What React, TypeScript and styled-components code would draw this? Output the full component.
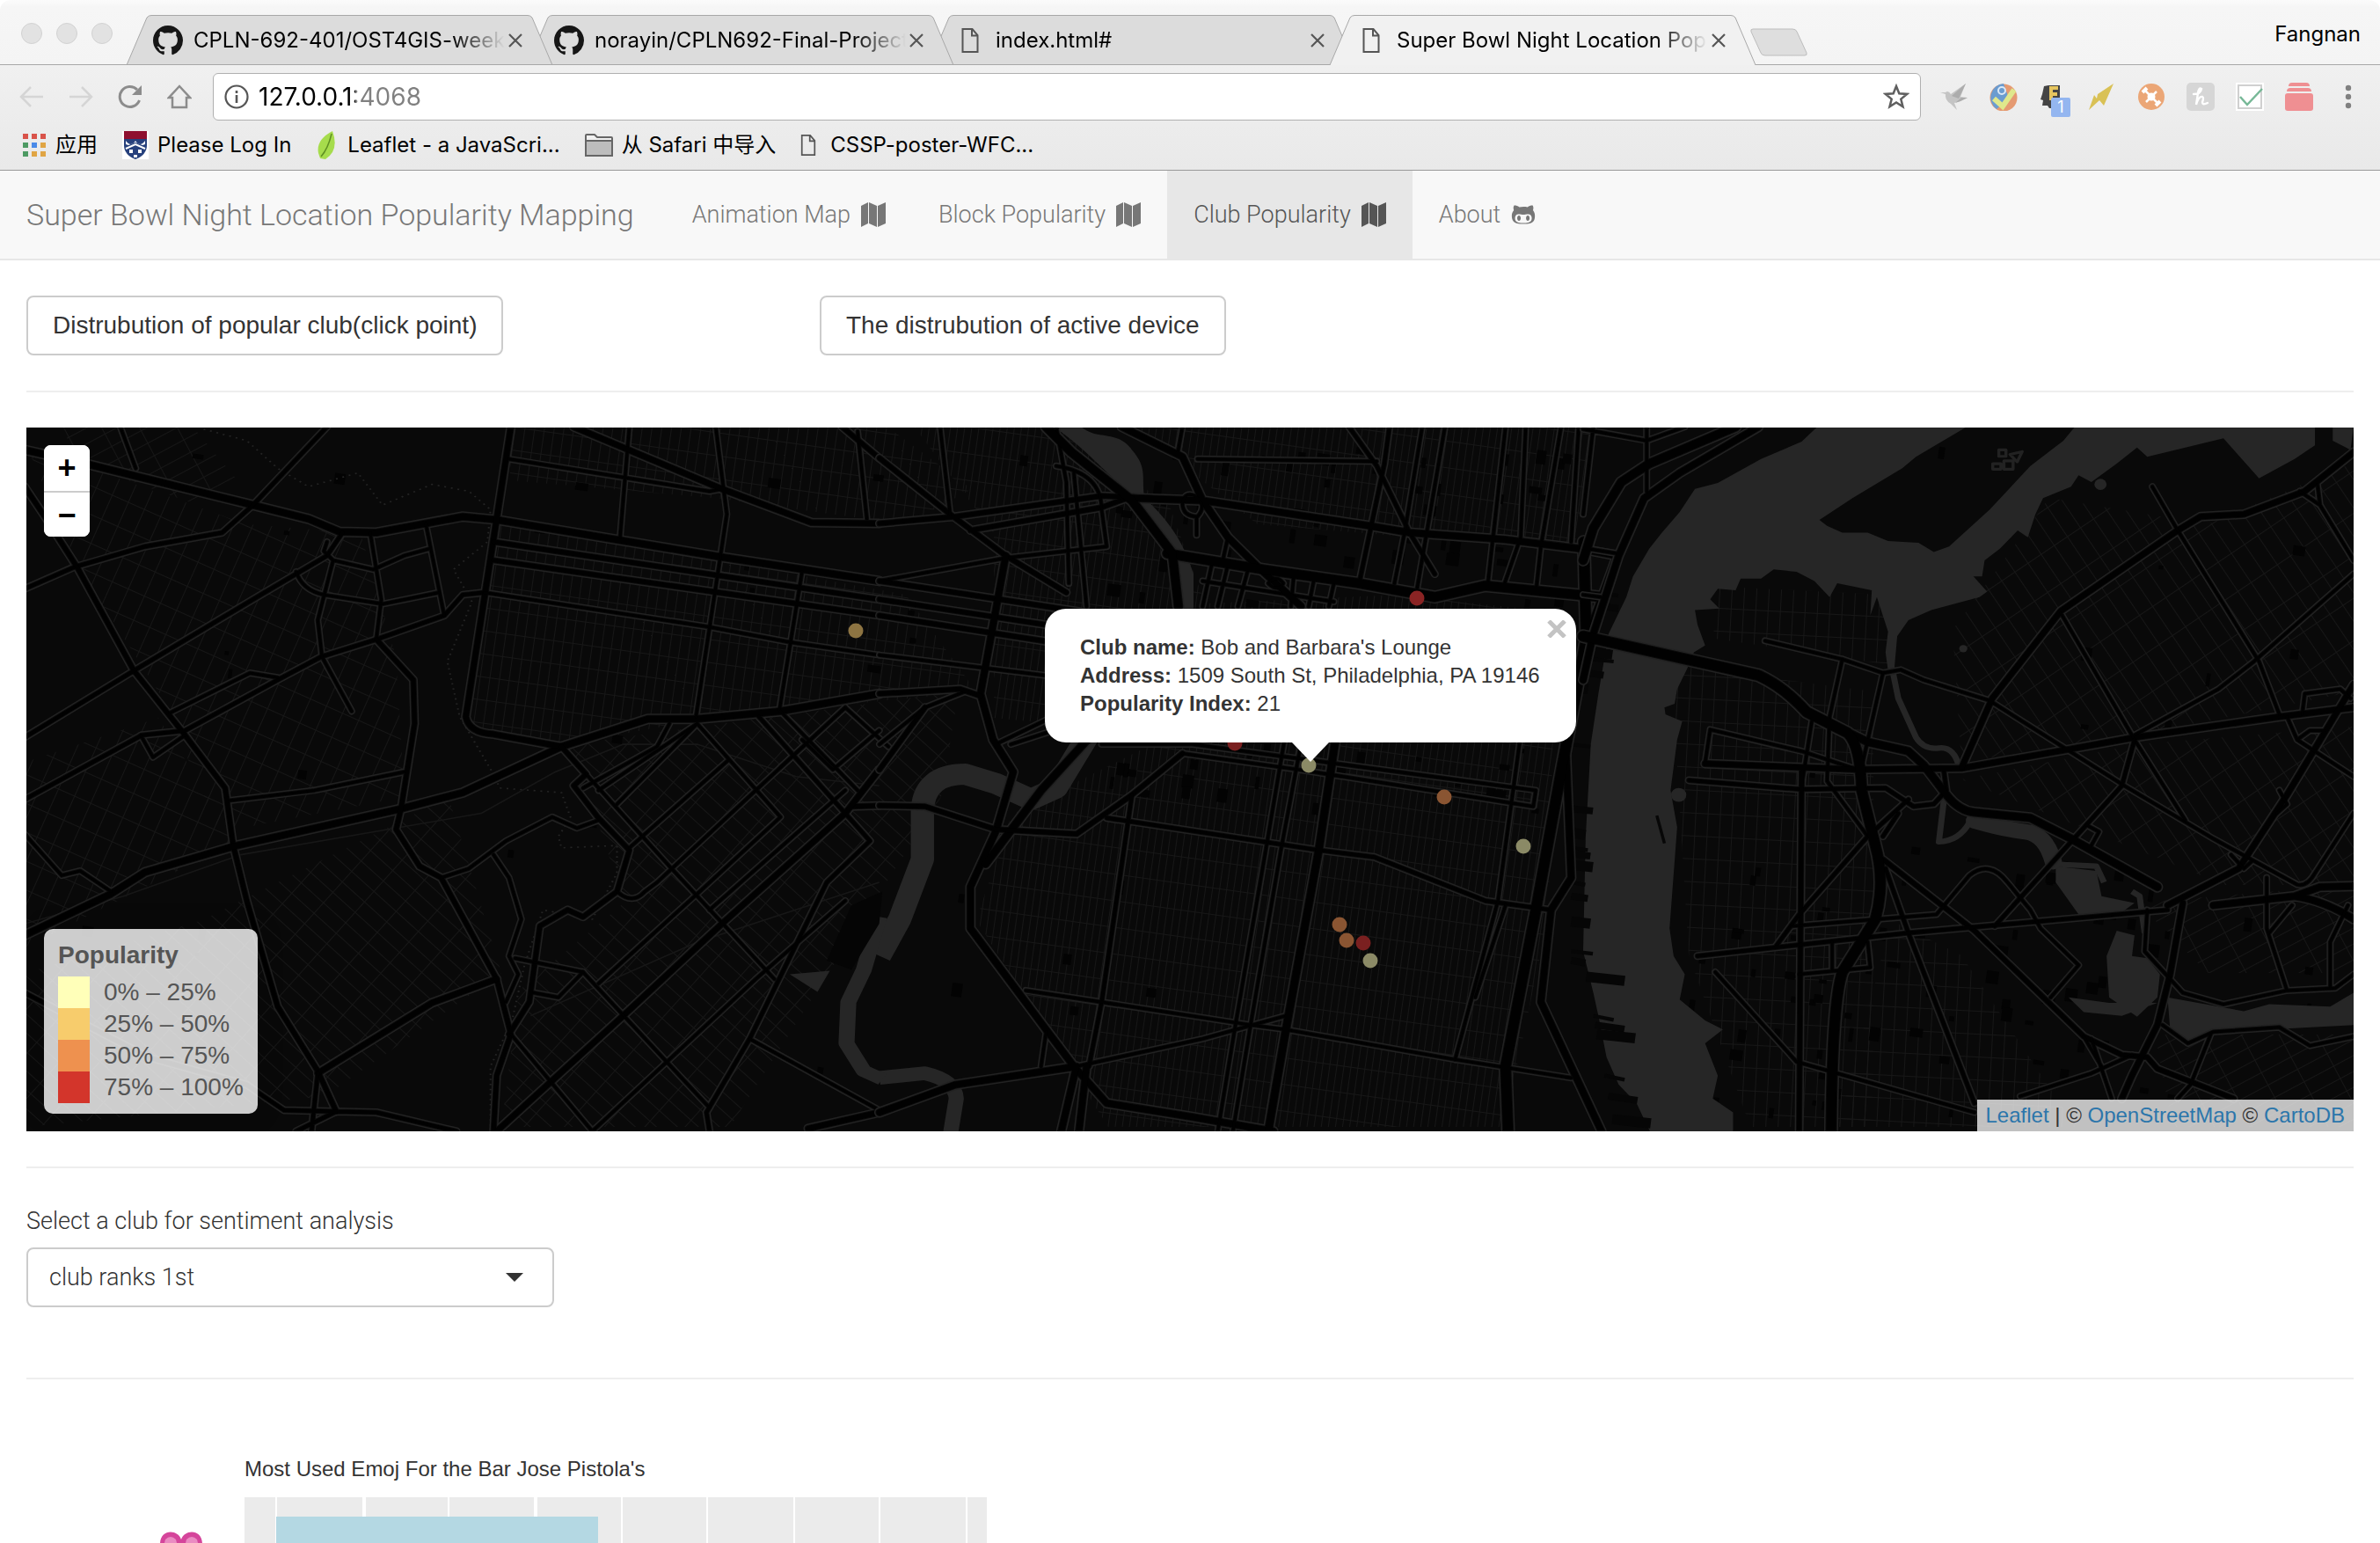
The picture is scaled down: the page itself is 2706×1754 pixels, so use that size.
import React from "react";
import styled, { createGlobalStyle } from "styled-components";
import { FaGithubAlt } from "react-icons/fa";

const sans = `"Liberation Sans", Arial, Helvetica, "Noto Sans CJK SC", sans-serif`;
const system = `Inter, "Noto Sans CJK SC", sans-serif`;
const light = `Roboto, "Liberation Sans", sans-serif`;

const GlobalStyle = createGlobalStyle`
  *, *::before, *::after { box-sizing: border-box; }
  body { margin: 0; background: #fff; color: #333; font-family: ${sans}; }
  button, input, select { font: inherit; color: inherit; margin: 0; }
  ul { list-style: none; margin: 0; padding: 0; }
  a { text-decoration: none; }
`;

/* ---------- Browser window ---------- */

const Window = styled.div`
  display: flex;
  flex-direction: column;
  height: 100vh;
  overflow: hidden;
`;

const Chrome = styled.header`
  flex: none;
  font-family: ${system};
  font-size: 24px;
  color: #000;
`;

const TabStrip = styled.div`
  display: flex;
  align-items: flex-end;
  height: 74px;
  padding: 0 22px 0 24px;
  border-bottom: 1px solid #a8a8a8;
  border-radius: 12px 12px 0 0;
  background: linear-gradient(#fbfbfb, #f6f6f6 8px, #f4f4f4);
`;

const Lights = styled.div`
  display: flex;
  gap: 16px;
  width: 120px;
  padding-bottom: 23px;
`;

const Light = styled.span`
  width: 24px;
  height: 24px;
  border: 1px solid #d2d2d2;
  border-radius: 50%;
  background: #e2e2e2;
`;

const Tab = styled.div<{ $order: number }>`
  position: relative;
  z-index: ${(p) => p.$order};
  display: flex;
  align-items: center;
  width: 484px;
  height: 57px;
  margin: 0 -28px -1px 0;
  padding: 0 34px 0 30px;
`;

const TabShape = styled.svg`
  position: absolute;
  inset: 0;
  z-index: -1;
  width: 100%;
  height: 100%;
`;

const Favicon = styled.span`
  display: flex;
  justify-content: center;
  flex: none;
  width: 34px;
`;

const TabTitle = styled.span`
  flex: 1;
  margin: 0 4px 0 12px;
  overflow: hidden;
  white-space: nowrap;
  line-height: 36px;
  mask-image: linear-gradient(90deg, #000 calc(100% - 60px), transparent);
`;

const IconButton = styled.button`
  position: relative;
  display: flex;
  align-items: center;
  justify-content: center;
  flex: none;
  padding: 0;
  border: 0;
  background: none;
`;

const NewTab = styled(IconButton)`
  margin: 0 0 9px 22px;
`;

const Profile = styled.span`
  margin-left: auto;
  padding-bottom: 19px;
  line-height: 30px;
`;

const Bars = styled.div`
  background: linear-gradient(#f0f0f0, #e9e9e9);
  border-bottom: 1px solid #999;
`;

const Toolbar = styled.div`
  display: flex;
  align-items: center;
  padding: 9px 32px 0 22px;
`;

const NavButtons = styled.div`
  display: flex;
  gap: 28px;
  margin-right: 24px;
`;

const Omnibox = styled.label`
  display: flex;
  align-items: center;
  flex: 1;
  height: 54px;
  padding: 0 12px;
  border: 1px solid #b0b0b0;
  border-radius: 6px;
  background: #fff;
`;

const Address = styled.input`
  flex: 1;
  padding: 0 0 0 11px;
  border: 0;
  outline: 0;
  font-size: 28px;
  line-height: 36px;
  color: transparent;
  background: linear-gradient(90deg, #000 121px, #808080 121px);
  background-clip: text;
  -webkit-background-clip: text;
`;

const Extensions = styled.div`
  display: flex;
  gap: 24px;
  margin: 0 36px 0 22px;
`;

const Extension = styled(IconButton)`
  width: 32px;
  height: 32px;
`;

const Badge = styled.span`
  position: absolute;
  left: 14px;
  top: 17px;
  width: 22px;
  height: 22px;
  border-radius: 2px;
  background: #94b6f0;
  color: #fff;
  font-size: 18px;
  line-height: 22px;
`;

const Bookmarks = styled.nav`
  display: flex;
  align-items: center;
  gap: 28px;
  height: 56px;
  padding: 0 26px;
`;

const Bookmark = styled.a<{ $gap?: number }>`
  display: flex;
  align-items: center;
  gap: ${(p) => p.$gap ?? 10}px;
  line-height: 36px;
  color: #000;
`;

/* ---------- Web page ---------- */

const Page = styled.div`
  flex: 1;
  min-height: 0;
  overflow: hidden;
`;

const SiteNav = styled.nav`
  display: flex;
  height: 102px;
  border-bottom: 2px solid #e7e7e7;
  background: #f8f8f8;
  font-family: ${light};
  font-weight: 300;
`;

const Brand = styled.a`
  display: flex;
  align-items: center;
  padding: 0 36px 0 30px;
  font-size: 34px;
  color: #777;
`;

const NavList = styled.ul`
  display: flex;
`;

const NavLink = styled.a<{ $active?: boolean }>`
  display: flex;
  align-items: center;
  gap: 12px;
  height: 100px;
  padding: 0 30px;
  font-size: 27px;
  color: ${(p) => (p.$active ? "#555" : "#777")};
  background: ${(p) => (p.$active ? "#e7e7e7" : "transparent")};
`;

const Content = styled.main`
  padding: 40px 30px;
`;

const Columns = styled.div`
  display: grid;
  grid-template-columns: repeat(3, 1fr);
  gap: 60px;
  justify-items: start;
`;

const Button = styled.button`
  height: 68px;
  padding: 0 28px;
  border: 2px solid #ccc;
  border-radius: 8px;
  background: #fff;
  font-size: 28px;
  line-height: 40px;
  color: #333;
`;

const Rule = styled.hr`
  height: 2px;
  margin: 40px 0;
  border: 0;
  background: #eee;
`;

const MapFrame = styled.section`
  position: relative;
  height: 800px;
  overflow: hidden;
  background: #0a0a0a;
`;

const MapDrawing = styled.svg`
  display: block;
  width: 100%;
  height: 100%;
`;

const ZoomControl = styled.div`
  position: absolute;
  left: 20px;
  top: 20px;
  width: 52px;
  border-radius: 8px;
  overflow: hidden;
  background: #fff;
`;

const ZoomButton = styled.button`
  display: block;
  width: 52px;
  height: 52px;
  padding: 0;
  border: 0;
  background: #fff;
  font-size: 36px;
  font-weight: 700;
  line-height: 52px;
  color: #000;
  & + & { border-top: 2px solid #ccc; }
`;

const Legend = styled.div`
  position: absolute;
  left: 20px;
  bottom: 20px;
  padding: 12px 16px;
  border-radius: 10px;
  background: rgba(255, 255, 255, 0.8);
  box-shadow: 0 0 30px rgba(0, 0, 0, 0.2);
  font-size: 28px;
  line-height: 36px;
  color: #555;
`;

const LegendTitle = styled.h4`
  margin: 0 0 6px;
  font-size: 28px;
`;

const LegendItem = styled.li`
  display: flex;
  gap: 16px;
`;

const Swatch = styled.span<{ $color: string }>`
  width: 36px;
  height: 36px;
  background: ${(p) => p.$color};
`;

const Attribution = styled.div`
  position: absolute;
  right: 0;
  bottom: 0;
  padding: 0 10px;
  background: rgba(255, 255, 255, 0.75);
  font-size: 24px;
  line-height: 36px;
  color: #333;
  a { color: #2c76ab; }
`;

const Popup = styled.div`
  position: absolute;
  left: calc(50% + 137px);
  top: 206px;
  transform: translateX(-50%);
  width: 604px;
  padding: 28px 40px;
  border-radius: 24px;
  background: #fff;
  font-size: 24px;
  line-height: 32px;
  color: #333;
  &::after {
    content: "";
    position: absolute;
    left: 50%;
    top: 100%;
    transform: translateX(-50%);
    border: solid transparent;
    border-width: 22px 21px 0;
    border-top-color: #fff;
  }
`;

const PopupText = styled.p`
  margin: 0;
  white-space: nowrap;
`;

const PopupClose = styled(IconButton)`
  position: absolute;
  right: 11px;
  top: 13px;
`;

const Field = styled.div`
  display: flex;
  flex-direction: column;
  gap: 10px;
  width: 600px;
  padding-bottom: 40px;
  font-family: ${light};
  font-weight: 300;
  font-size: 27px;
  line-height: 40px;
`;

const SelectBox = styled.div`
  display: grid;
  align-items: center;
  > * { grid-area: 1 / 1; }
`;

const Select = styled.select`
  appearance: none;
  height: 68px;
  padding: 0 24px;
  border: 2px solid #ccc;
  border-radius: 8px;
  background: #fff;
`;

const Caret = styled.span`
  justify-self: end;
  margin-right: 35px;
  border: solid transparent;
  border-width: 10px 10px 0;
  border-top-color: #333;
  pointer-events: none;
`;

const Figure = styled.figure`
  margin: 86px 0 0 120px;
`;

const ChartTitle = styled.figcaption`
  margin: 0 0 16px 128px;
  font-size: 24px;
  line-height: 32px;
  color: #333;
`;

/* ---------- Icons ---------- */

const GithubMark = () => (
  <svg width="34" height="34" viewBox="0 0 16 16" fill="#161616">
    <path d="M8 0C3.58 0 0 3.58 0 8c0 3.54 2.29 6.53 5.47 7.59.4.07.55-.17.55-.38 0-.19-.01-.82-.01-1.49-2.01.37-2.53-.49-2.69-.94-.09-.23-.48-.94-.82-1.13-.28-.15-.68-.52-.01-.53.63-.01 1.08.58 1.23.82.72 1.21 1.87.87 2.33.66.07-.52.28-.87.51-1.07-1.78-.2-3.64-.89-3.64-3.95 0-.87.31-1.59.82-2.15-.08-.2-.36-1.02.08-2.12 0 0 .67-.21 2.2.82.64-.18 1.32-.27 2-.27.68 0 1.36.09 2 .27 1.53-1.04 2.2-.82 2.2-.82.44 1.1.16 1.92.08 2.12.51.56.82 1.27.82 2.15 0 3.07-1.87 3.75-3.65 3.95.29.25.54.73.54 1.48 0 1.07-.01 1.93-.01 2.2 0 .21.15.46.55.38A8.013 8.013 0 0016 8c0-4.42-3.58-8-8-8z" />
  </svg>
);

const FileIcon = ({ width, height }: { width: number; height: number }) => (
  <svg width={width} height={height} viewBox="0 0 20 28" fill="none" stroke="#555" strokeWidth="2">
    <path d="M1.500 1h11l6 7v19h-17z M12 1v7.500h6.500" />
  </svg>
);

const CloseIcon = () => (
  <svg width="16" height="16" viewBox="0 0 16 16" stroke="#555" strokeWidth="2.200">
    <path d="M1 1l14 14M15 1L1 15" />
  </svg>
);

const MapIcon = () => (
  <svg width="28" height="28" viewBox="0 0 28 28" fill="currentColor">
    <path d="M0 4L8 0V24L0 28Z M9 0L18 4V28L9 24Z M19 4L28 0V24L19 28Z" />
  </svg>
);

const PennIcon = () => (
  <svg width="30" height="32" viewBox="0 0 30 32">
    <path fill="#fff" d="M0 0h30v32H0z" />
    <path fill="#8f0f2f" d="M2 0h26v9H2z" />
    <path fill="#26407c" d="M2 9h26v7q0 11-13 16Q2 27 2 16z" />
    <path fill="#fff" d="M4 11q6 8 11 0q5 8 11 0v4l-3 1-8-3-8 3-3-1z" />
    <path fill="none" stroke="#fff" strokeWidth="2" d="M4 20l11-5 11 5" />
    <path fill="#fff" d="M8 21h4v4H8zM18 21h4v4h-4zM13 27h4v3h-4z" />
  </svg>
);

const AppsIcon = () => (
  <svg width="27" height="27" viewBox="0 0 27 27">
    {["#d9534a", "#d9534a", "#d9534a", "#4d9a63", "#4a8ae8", "#e0a544", "#4d9a63", "#e0a544", "#e0a544"].map((c, i) => (
      <rect key={i} x={(i % 3) * 10} y={Math.floor(i / 3) * 10} width="6" height="6" fill={c} />
    ))}
  </svg>
);

const LeafIcon = () => (
  <svg width="24" height="32" viewBox="0 0 24 32">
    <path fill="#a6dc4c" d="M19 0Q0 10 3 25l2 6 6 1Q27 22 19 0z" />
    <path fill="none" stroke="#5f8f22" strokeWidth="1.500" d="M18 3Q14 20 6 29" />
  </svg>
);

const FolderIcon = () => (
  <svg width="32" height="26" viewBox="0 0 32 26" stroke="#666" strokeWidth="2">
    <path fill="#f0f0f0" d="M1 24V2q0-1 1-1h9l3 3h16q1 0 1 1v19z" />
    <path fill="#bdbdbd" d="M1 8h30v17H1z" />
  </svg>
);

const extensionArt: [string, React.ReactNode][] = [
  ["Bird", <g key="b"><path fill="#c4c4c4" d="M0 11l6 0q3-3 6 2L29 1 23 16l8 1-8 4-7 2 3 8-7-7q-7-4-6-11z" /><path fill="#acacac" d="M13 15L29 1 21 18zM17 23l7-6 7 0-8 4z" /></g>],
  ["Checker", <g key="c"><circle cx="16" cy="17" r="15.500" fill="#e59a72" /><path fill="#6b9cd0" d="M16 1A16 16 0 0 0 8 30l14-12z" /><circle cx="14" cy="9" r="4" fill="none" stroke="#dce9f6" strokeWidth="2" /><path fill="none" stroke="#dfe88c" strokeWidth="6" d="M5 18l10 9L28 8" /></g>],
  ["Bold head", <g key="h"><path fill="#444" d="M6 4l5-1h13v17h-5v9l-7 0-2-3H4l1-6-3-1 2-6z" /><path fill="none" stroke="#e6c55e" strokeWidth="4" d="M22 6h-8v14M14 13h7" /></g>],
  ["Lightning", <path key="l" fill="#d9c155" d="M29 1L11 13l-1 5-3-4L1 31l12-11 5 6z" />],
  ["Hub", <g key="o"><circle cx="16" cy="16" r="15" fill="#eba676" /><circle cx="16" cy="16" r="4.500" fill="#fff" /><path stroke="#fff" strokeWidth="2.500" d="M9 9l14 14M22 10L10 22" /><path stroke="#fff" strokeWidth="4" d="M6 11l5-5M21 26l5-5" /></g>],
  ["Script", <g key="s"><rect width="32" height="32" rx="5" fill="#d6d6d6" /><path fill="none" stroke="#fff" strokeWidth="2.400" strokeLinecap="round" d="M8 13q8 0 9-6-3-2-4 5l-2 13q3-10 7-9 2 1 0 6 0 4 6 1" /></g>],
  ["Tick", <g key="t"><path fill="#fff" d="M0 0h32v32H0z" /><path fill="none" stroke="#d0d0d0" strokeWidth="2" d="M3 3h26v26H3z" /><path fill="none" stroke="#77b897" strokeWidth="2.500" d="M5 16l8 9L30 7" /></g>],
  ["Stack", <g key="k" fill="#ef8f92"><rect y="12" width="32" height="20" rx="3" /><path d="M2 10q0-4 4-4h20q4 0 4 4zM4 4q0-4 4-4h16q4 0 4 4z" /></g>],
];

/* ---------- Map ---------- */

type Road = [number, string];

const frames = {
  west: "translate(-30 -6) scale(.7015 .523)",
  centre: "translate(970 -6) scale(.574 .523)",
  east: "translate(1770 -6) scale(.5778 .523)",
};

const westRoads: Road[] = [
  [8, "M40 60L145 92 410 180 500 210 550 238 610 240 750 205 805 212 1165 292 1425 345"],
  [5, "M40 362L120 315 235 270 360 240 410 180 530 10"],
  [6, "M40 140L75 210 125 315 217 540 300 680 365 795 378 920 400 1040 450 1270 515 1410 545 1498"],
  [5, "M40 685L217 540 410 385 530 290 555 240"],
  [5, "M40 820L230 680 300 670 450 560 520 510 610 472 720 420 750 375 785 370"],
  [4, "M228 680L248 728 300 680M275 632L405 545 450 555"],
  [8, "M40 1115L180 1025 235 978 378 922 650 840 750 805 910 705 1050 645 1130 645 1265 628 1425 590"],
  [4, "M40 895L100 985 130 975 180 1020"],
  [7, "M828 10L805 210 755 640Q760 675 800 678L910 705"],
  [4, "M825 80L1150 150 1170 145M1020 10L1005 250M1160 10L1178 200 1128 640M1300 325L1263 628"],
  [7, "M930 10L1170 145 1315 218 1425 220"],
  [4, "M1390 20L1405 210M195 10L220 100"],
  [6, "M800 260L1425 385M800 300L1425 420"],
  [4, "M785 370L1150 445 1280 478 1425 506"],
  [6, "M1380 835L1425 833"],
  [6, "M1365 10L1425 78"],
  [4, "M530 260L525 280 540 300 605 320 655 290 695 275M600 240L618 385 610 470M690 220L720 420M540 300L515 430 522 510 570 628"],
  [4, "M480 325Q490 365 525 375L620 395 712 370"],
  [6, "M610 472L670 560 672 655 650 840 642 885 680 965 715 990 805 1210 828 1330 805 1420 800 1541"],
  [4, "M372 822L510 800 655 760M715 990L760 970 820 910 895 858 935 882 970 865M800 940L825 990 845 1080 825 1160 840 1200 820 1260"],
  [6, "M910 705L950 765 930 790 970 860 1020 930 1000 1020 945 1075 920 1060 875 1095 858 1260 825 1330"],
  [4, "M950 765L1085 965 1255 1210M1000 1020Q1025 1050 1045 1020L1065 1000 1225 800 1370 620"],
  [4, "M945 795L1065 705 1085 655M970 800L1130 655M1000 830L1130 655 1265 858 1130 1025M1020 925L1180 735"],
  [7, "M805 1541L1010 1290 1170 1090 1370 850 1425 755"],
  [4, "M960 1541L1225 1210 1370 1040M828 1330L960 1541M1150 1060L1370 800M970 1220L1130 1025M945 1195L1150 1490"],
  [5, "M1230 640L1370 850 1410 910 1340 1000 1215 1340 1145 1500 1150 1541"],
  [4, "M1265 628L1390 800M1370 620L1440 705M1265 750L1370 620M1300 690L1350 755 1425 670M1215 1340L1425 1495"],
  [7, "M1310 1535L1425 1500M515 1415L700 1262 805 1210"],
  [5, "M515 1415L505 1541M400 1440L460 1495 545 1498 610 1500 740 1541M545 1498L480 1541M40 1240L240 1380 400 1440"],
  [4, "M835 1165L945 1195 905 1250 865 1240"],
];

const centreRoads: Road[] = [
  [5, "M1010 10L1000 90 950 350M930 10L985 95 1050 240 1100 330"],
  [4, "M630 80L985 85M1075 10L1040 240 1020 350M1120 10L1065 360M1240 10L1205 350M1280 10L1270 250 1235 360M1350 10L1310 270 1300 370M1385 10L1370 260M600 10L590 70"],
  [4, "M660 300L640 400M690 310L670 400M730 320L710 400M820 340L815 400M860 345L850 400M900 350L890 400M640 345L900 390M690 250L680 300"],
  [6, "M0 220L150 205 440 160 540 165M180 235L440 185 490 165M0 78L140 200 250 290 370 370"],
  [4, "M120 10L140 200M0 345L250 295 450 270M350 10L370 130 375 350M385 110L410 400M350 95Q440 110 440 190L450 270"],
  [6, "M0 345L400 412M0 385L400 452M0 420L400 488"],
  [4, "M0 506L400 560M0 700L90 620 170 585M230 700L400 610M260 700L400 650"],
  [8, "M250 290L200 590 225 690 265 760 230 890 180 1010 180 1100 330 1320 385 1400 450 1480 620 1510 780 1541"],
  [6, "M0 590L160 580 200 595M0 755L90 620"],
  [9, "M420 680L320 800 210 960"],
  [6, "M0 833L90 835 230 885 390 895 500 810 600 720"],
  [5, "M500 810L440 1260 415 1400M450 860L870 930 980 945 1200 1040 1330 1060"],
  [4, "M810 640L765 930 705 1310 670 1541M845 640L795 930 735 1310 700 1541"],
  [4, "M440 700L620 700 1300 800 1295 835 830 755 600 720M1275 640L1225 1040 1140 1385M1240 1050L1180 1250"],
  [4, "M290 1235L735 1310 805 1320 1140 1385 1370 1425M390 1400L640 1340 805 1290"],
  [8, "M0 1500L150 1440 390 1400 360 1541M410 1400L395 1541"],
  [9, "M910 640L870 930 805 1320 770 1541"],
  [4, "M330 1325L320 1400"],
  [8, "M500 165L640 170 820 200 970 225 1050 240 1240 255 1390 275 1460 290M480 10L600 75 640 170 690 250 750 315 835 400"],
  [4, "M600 175Q605 150 625 160Q650 180 630 205Q600 205 600 175M628 205V245M770 350Q785 330 800 350Q790 370 770 350"],
  [11, "M570 285L650 300 760 320 950 350 1100 380 1200 355 1430 380"],
  [10, "M330 10L380 65 500 170 580 285 592 400"],
  [7, "M1460 290L1400 470"],
  [8, "M1360 720L1370 990 1330 1060 1310 1260 1430 1541"],
  [12, "M1395 260L1400 470 1350 760 1300 1060 1240 1400 1245 1541"],
];

const eastRoads: Road[] = [
  [4, "M125 10V150M20 10L0 200M10 275L65 285M0 375L35 380M0 15L125 40 200 10"],
  [5, "M208 778L430 798 595 795 650 835 690 830 715 800 710 760"],
  [4, "M240 740L250 668 430 715 540 755M358 475L510 515 590 545 625 538 670 560 800 605 1065 790 1240 905 1405 1005Q1425 1010 1440 980L1516 850"],
  [4, "M510 515L485 640 480 780 560 900M590 545L550 740M450 650L430 790"],
  [6, "M430 760L425 1541"],
  [7, "M240 742L540 755 745 752 960 710 1085 685 1370 640 1516 620"],
  [7, "M745 750L805 600 940 410 1170 235 1215 205 1300 200 1420 150 1516 65"],
  [4, "M1120 140L1170 235 1330 520 1370 635M940 415L1085 690 1185 865M1085 680L1250 580 1320 520 1516 330M1410 150L1450 180 1516 300M1450 180L1445 135"],
  [5, "M1085 690L1060 790 810 1095M560 900L425 1070 380 1138M640 820L560 900M620 850L590 900"],
  [6, "M590 950L770 1105 985 1335 1060 1375 1110 1380 1130 1405 1280 1470"],
  [5, "M595 970L640 1110 770 1480"],
  [5, "M225 1160L640 1110 1150 1060"],
  [7, "M1150 1050L1290 970 1385 810 1516 570"],
  [4, "M410 1095L695 1070 760 985Q800 950 835 1000L880 1060 900 1100 975 1180 920 1250"],
  [4, "M260 1195L420 1390 770 1500M425 1200L565 1185 560 1130M490 1130V1190"],
  [8, "M1240 1050L1400 1030 1450 1010 1516 1008M1400 1030Q1460 1040 1516 1080"],
  [7, "M1180 1045L1155 1200 1130 1310 1080 1420 1060 1470"],
  [4, "M1110 1060L1105 1150 1180 1240 1260 1265 1385 1235 1480 1230 1516 1200M1345 990V1100L1385 1235M1395 1050L1350 1110M1505 1050L1470 1130V1230"],
  [4, "M1140 1310L1190 1350 1240 1325 1370 1315 1430 1355 1516 1335M860 1465L1000 1415 1080 1375M1235 1330L1195 1440 1170 1470M1000 1340L1040 1470M985 1335L1020 1400"],
  [4, "M1385 640L1405 690 1516 770M1405 690L1430 670H1460M1415 635L1420 590 1490 580 1510 600M990 875L1015 890 1000 920M1275 940L1300 970 1315 955M1370 800L1385 830 1365 850"],
  [8, "M345 10L190 110 120 165 70 290 20 460 0 560"],
  [10, "M300 10L130 90 75 130 20 230 0 300"],
  [9, "M440 630L560 695 640 715 670 745 715 810Q740 845 770 848L880 860 960 905 1130 1010"],
  [12, "M0 465L345 550Q395 575 440 630L520 675Q545 700 548 800L575 920Q595 1000 575 1080L510 1195Q490 1260 488 1541"],
];

const Network = ({ frame, roads }: { frame: string; roads: Road[] }) => (
  <g transform={frame} fill="none" strokeLinejoin="round" strokeLinecap="round">
    {roads.map(([w, d], i) => (
      <path key={i} d={d} stroke="#222" strokeWidth={w + 4} vectorEffect="non-scaling-stroke" />
    ))}
    {roads.map(([w, d], i) => (
      <path key={i} d={d} stroke="#0a0a0a" strokeWidth={w + 1} vectorEffect="non-scaling-stroke" />
    ))}
    {roads.map(([w, d], i) => (
      <path key={i} d={d} stroke="#010101" strokeWidth={w - 1} vectorEffect="non-scaling-stroke" />
    ))}
  </g>
);

const grids: [string, number, number, number][] = [
  ["gridA", 8, 11, 26],
  ["gridB", 8, 8, 30],
  ["gridC", -48, 16, 34],
  ["gridD", 24, 20, 30],
  ["gridE", 3, 14, 26],
  ["gridF", -34, 18, 40],
  ["gridG", 62, 16, 38],
];

const areas: [string, string][] = [
  ["gridA", "M535 105L1000 190 1080 300 780 330 600 362 500 340Z"],
  ["gridA", "M550 0H980L1075 70 1000 110 780 80 550 60Z"],
  ["gridB", "M1010 0H1180L1300 90 1340 200 1560 190 1740 210 1730 560 1680 795H1230L1080 560 1120 440 1300 350 1100 330 1100 120Z"],
  ["gridB", "M1260 0H1780L1760 140 1400 110Z"],
  ["gridC", "M620 360L1060 300 1040 420 800 795H540L560 640 680 540Z"],
  ["gridC", "M0 620L200 560 480 420 540 620 340 760 0 795Z"],
  ["gridD", "M0 20L250 110 380 120 420 260 430 420 220 460 150 300 60 160Z"],
  ["gridD", "M0 380L150 330 240 470 0 590Z"],
  ["gridG", "M40 0H190L240 60 200 90 60 40Z"],
  ["gridE", "M1870 270L2100 300 2100 795H1960L1890 600Z"],
  ["gridE", "M2120 560L2200 600 2330 795H2060Z"],
  ["gridE", "M1910 180L2110 190 2120 270 1920 240Z"],
  ["gridF", "M2190 230L2300 80 2480 110 2646 40V300L2400 350 2200 380Z"],
  ["gridF", "M2200 400L2400 360 2646 340V520L2500 520 2300 440Z"],
  ["gridG", "M2400 540L2646 520V620H2480ZM2420 690H2646V795H2440Z"],
];

/* Building footprints are scattered with a fixed seed so that the map is stable. */
const buildings = (() => {
  let seed = 41;
  const next = () => ((seed = (seed * 16807) % 2147483647) / 2147483647);
  return Array.from({ length: 260 }, (_, i) => {
    const box = i < 120 ? [1230, 20, 520, 400] : i < 190 ? [1880, 480, 560, 310] : [60, 20, 2540, 760];
    return { x: box[0] + next() * box[2], y: box[1] + next() * box[3], w: 4 + next() * 11, h: 4 + next() * 12 };
  });
})();

const piers = [372, 400, 500, 515, 545, 575, 700, 840, 892, 925, 938, 962, 1000, 1030, 1085, 1150, 1170, 1205, 1290, 1310, 1330, 1420, 1465, 1515];

const markers: [number, number, string][] = [
  [943, 231, "#8d7442"],
  [1581, 194, "#8a2424"],
  [1374, 359, "#7a2020"],
  [1458, 384, "#8b8a66"],
  [1612, 420, "#8a5532"],
  [1702, 476, "#8b8a66"],
  [1493, 565, "#8a5532"],
  [1501, 583, "#8a5532"],
  [1520, 586, "#7a2020"],
  [1528, 606, "#8b8a66"],
];

const CityMap = () => (
  <MapDrawing viewBox="0 0 2646 800" preserveAspectRatio="xMidYMid slice" aria-label="Dark street map of Philadelphia">
    <defs>
      {grids.map(([id, angle, w, h]) => (
        <pattern key={id} id={id} width={w} height={h} patternUnits="userSpaceOnUse" patternTransform={`rotate(${angle})`}>
          <path d={`M0 0H${w}M0 0V${h}`} stroke="#171717" strokeWidth="2" />
        </pattern>
      ))}
    </defs>
    <rect width="2646" height="800" fill="#090909" />
    {areas.map(([id, d], i) => (
      <path key={i} d={d} fill={`url(#${id})`} />
    ))}
    {buildings.map((b, i) => (
      <rect key={i} x={b.x} y={b.y} width={b.w} height={b.h} fill="#030303" transform={`rotate(8 ${b.x} ${b.y})`} />
    ))}

    <g transform={frames.east} fill="#262626">
      <path d="M770 0L655 75 628 100 530 165 465 212 480 225 510 240 560 240 600 258 660 262 690 282 720 270 800 190 880 95 945 40 975 0H1440V50L1400 80 1330 122 1260 35 1110 75 1090 55 1050 90 1000 130 975 115 960 140 905 165 890 200 875 250 855 235 820 275 790 300 785 335 768 335 795 368 780 380 685 408 640 430 618 465 612 540 600 540 595 500 600 455 578 380 565 420 568 365 500 350 485 380 455 345 420 325 375 320 350 340 310 340 300 365 265 362 250 385 268 405 220 408 225 440 240 485 218 500 205 535 185 580 180 612 160 620 162 635 195 650 185 690 172 800 185 880 170 1100 178 1160 200 1200 190 1255 240 1300 275 1320 240 1350 265 1420 255 1470 295 1500V1550H135L105 1480 70 1440 46 1380 30 1290 20 1240 0 1150 5 900 15 700 30 590 50 460 85 380 98 335 130 275 155 240 190 195 220 145 265 132 350 80 430 42 470 0Z" />
      <path d="M1475 10H1516L1510 60 1475 40ZM930 965L1010 975 1020 1030 1085 1045 1060 1065 975 1070 930 1000ZM1050 1105L1085 1115 1080 1160 1110 1165 1135 1200 1130 1250 1090 1292 1035 1250 1030 1160ZM1150 1250L1300 1280 1350 1265 1470 1270 1516 1240V1310L1350 1320 1240 1325 1190 1345 1155 1320ZM955 1250L1035 1262 1130 1262 1060 1290 985 1282Z" />
      <circle cx="188" cy="810" r="15" />
      <circle cx="748" cy="492" r="8" />
      <circle cx="1018" cy="135" r="12" />
      <g fill="none" stroke="#262626" strokeWidth="12" strokeLinejoin="round">
        <path d="M608 535L620 600 655 685Q670 712 700 708T740 750" />
        <path d="M710 820L700 912Q740 910 760 870L800 865M1080 1020L1095 1030 1105 1110M920 960L1010 965 1025 1000" />
        <path strokeWidth="34" d="M770 866Q830 885 870 890T925 955" strokeLinecap="round" />
      </g>
      <path d="M145 855L160 915" stroke="#070707" strokeWidth="6" />
      <path d="M818 60h14v14h-14zM840 70l24-6-10 22zM806 90h16v12h-16zM828 84h18v18h-18z" fill="none" stroke="#222" strokeWidth="6" strokeLinejoin="round" />
    </g>
    <g transform={frames.centre} fill="#262626">
      <path d="M345 10C400 50 430 90 500 160 535 200 575 260 592 330V405H622V330C605 270 580 220 525 165 518 120 532 100 500 60 470 15 430 40 400 10Z" />
      <g fill="none" stroke="#262626" strokeLinejoin="round">
        <path strokeWidth="46" d="M430 650L350 795 300 820 230 785 170 765Q90 765 85 840L85 950 40 1080 0 1160" />
        <path strokeWidth="30" d="M0 1425L90 1415Q150 1430 152 1470L140 1550" />
      </g>
      <g stroke="#060606" fill="none">
        {piers.map((y, i) => (
          <path key={y} strokeWidth={8 + (i % 3) * 7} d={y < 1200 ? `M${y < 560 ? 1435 - (y - 372) / 6 : 1370} ${y}l${28 + (i % 4) * 5} 5` : `M${1400 + (y - 1205) / 6} ${y}l${40 + (i % 3) * 18} 9`} />
        ))}
      </g>
    </g>
    <g transform={frames.west} fill="none">
      <path stroke="#262626" strokeWidth="26" strokeLinejoin="round" d="M1425 1075L1400 1190 1375 1260 1372 1350 1400 1410 1430 1428" />
      <path fill="#050505" d="M1380 1050L1430 1020 1425 1090 1380 1190 1340 1170Z" />
      <path fill="#262626" d="M1280 1200L1345 1192 1325 1238Z" />
      <path stroke="#242424" strokeWidth="3" strokeDasharray="3 8" d="M330 15L400 40 450 100 500 140 580 110 620 180 700 135 760 150 795 190 790 260 735 320 765 390 725 520 745 640 800 765 810 795 910 805 925 860 905 900 910 925 1000 920 1000 980 960 1080 880 1060 850 1180 830 1300 795 1400V1541" />
      <path stroke="#171717" strokeWidth="3" d="M390 940L650 880 780 850 900 760 1010 700 1130 700 1290 770 1425 790M40 1090L200 1030 390 940M860 1290L1130 1130 1425 1000" />
    </g>

    <Network frame={frames.west} roads={westRoads} />
    <Network frame={frames.centre} roads={centreRoads} />
    <Network frame={frames.east} roads={eastRoads} />

    {markers.map(([x, y, color]) => (
      <circle key={`${x}-${y}`} cx={x} cy={y} r="8.500" fill={color} />
    ))}
  </MapDrawing>
);

/* ---------- Data ---------- */

const tabs = [
  { title: "CPLN-692-401/OST4GIS-week-6", github: true },
  { title: "norayin/CPLN692-Final-Project", github: true },
  { title: "index.html#", github: false },
  { title: "Super Bowl Night Location Popularity", github: false, active: true },
];

const pages = ["Animation Map", "Block Popularity", "Club Popularity"];

const classes = [
  ["#ffffb9", "0% – 25%"],
  ["#f7cc6c", "25% – 50%"],
  ["#ee914f", "50% – 75%"],
  ["#d3352b", "75% – 100%"],
];

const gridLines = [36, 136, 232, 331, 429, 526, 625, 722, 821];

export default function App() {
  return (
    <Window>
      <GlobalStyle />
      <Chrome>
        <TabStrip>
          <Lights><Light /><Light /><Light /></Lights>
          {tabs.map((t, i) => (
            <Tab key={t.title} $order={t.active ? 9 : 5 - i}>
              <TabShape viewBox="0 0 484 57" preserveAspectRatio="none">
                <path d="M0 57L23 3Q25 .5 28 .5H456Q459 .5 461 3L484 57" fill={t.active ? "#f1f1f1" : "#dcdcdc"} stroke="#a8a8a8" />
                {!t.active && <path d="M0 56.500H484" stroke="#a8a8a8" />}
              </TabShape>
              <Favicon>{t.github ? <GithubMark /> : <FileIcon width={20} height={28} />}</Favicon>
              <TabTitle>{t.title}</TabTitle>
              <IconButton aria-label="Close tab"><CloseIcon /></IconButton>
            </Tab>
          ))}
          <NewTab aria-label="New tab">
            <svg width="66" height="32" viewBox="0 0 66 32">
              <path d="M3 1H48Q52 1 53 4L64 28Q65 31 62 31H17Q13 31 12 28L1 4Q0 1 3 1Z" fill="#dedede" stroke="#bdbdbd" />
            </svg>
          </NewTab>
          <Profile>Fangnan</Profile>
        </TabStrip>
        <Bars>
          <Toolbar>
            <NavButtons>
              <IconButton aria-label="Back">
                <svg width="28" height="28" viewBox="0 0 28 28" fill="none" stroke="#d5d5d5" strokeWidth="2.500"><path d="M27 14H2M13 3L2 14l11 11" /></svg>
              </IconButton>
              <IconButton aria-label="Forward">
                <svg width="28" height="28" viewBox="0 0 28 28" fill="none" stroke="#d5d5d5" strokeWidth="2.500"><path d="M1 14h25M15 3l11 11-11 11" /></svg>
              </IconButton>
              <IconButton aria-label="Reload">
                <svg width="28" height="28" viewBox="0 0 28 28" fill="none" stroke="#8c8c8c" strokeWidth="3"><path d="M24.500 18A11.500 11.500 0 1 1 22 6" /><path d="M27 1v11H16z" fill="#8c8c8c" stroke="none" /></svg>
              </IconButton>
              <IconButton aria-label="Home">
                <svg width="28" height="28" viewBox="0 0 28 28" fill="none" stroke="#8c8c8c" strokeWidth="2.500"><path d="M14 2L2 15h4v11h16V15h4z" /></svg>
              </IconButton>
            </NavButtons>
            <Omnibox>
              <svg width="28" height="28" viewBox="0 0 28 28" fill="none" stroke="#555" strokeWidth="2.200"><circle cx="14" cy="14" r="12.500" /><path d="M14 12v9M14 7v3" strokeWidth="2.600" /></svg>
              <Address aria-label="Address" defaultValue="127.0.0.1:4068" />
              <IconButton aria-label="Bookmark this page">
                <svg width="30" height="30" viewBox="0 0 30 30" fill="none" stroke="#5f5f5f" strokeWidth="2.500"><path d="M15 3l3.300 8.300 8.900.6-6.900 5.700 2.200 8.700L15 21.500l-7.500 4.800 2.200-8.700-6.900-5.700 8.900-.6z" /></svg>
              </IconButton>
            </Omnibox>
            <Extensions>
              {extensionArt.map(([name, art]) => (
                <Extension key={name} aria-label={name}>
                  <svg width="32" height="32" viewBox="0 0 32 32">{art}</svg>
                  {name === "Bold head" && <Badge>1</Badge>}
                </Extension>
              ))}
            </Extensions>
            <IconButton aria-label="Menu">
              <svg width="8" height="28" viewBox="0 0 8 28" fill="#808080"><circle cx="4" cy="4" r="3.200" /><circle cx="4" cy="14" r="3.200" /><circle cx="4" cy="24" r="3.200" /></svg>
            </IconButton>
          </Toolbar>
          <Bookmarks>
            <Bookmark href="#apps"><AppsIcon />应用</Bookmark>
            <Bookmark href="#login"><PennIcon />Please Log In</Bookmark>
            <Bookmark href="#leaflet" $gap={12}><LeafIcon />Leaflet - a JavaScri...</Bookmark>
            <Bookmark href="#safari"><FolderIcon />从 Safari 中导入</Bookmark>
            <Bookmark href="#poster" $gap={16}><FileIcon width={18} height={24} />CSSP-poster-WFC...</Bookmark>
          </Bookmarks>
        </Bars>
      </Chrome>

      <Page>
        <SiteNav>
          <Brand href="#home">Super Bowl Night Location Popularity Mapping</Brand>
          <NavList>
            {pages.map((p) => (
              <li key={p}>
                <NavLink href={`#${p}`} $active={p === "Club Popularity"}>{p}<MapIcon /></NavLink>
              </li>
            ))}
            <li><NavLink href="#about">About<FaGithubAlt size={28} /></NavLink></li>
          </NavList>
        </SiteNav>

        <Content>
          <Columns>
            <Button>Distrubution of popular club(click point)</Button>
            <Button>The distrubution of active device</Button>
          </Columns>
          <Rule />
          <MapFrame>
            <CityMap />
            <ZoomControl>
              <ZoomButton aria-label="Zoom in">+</ZoomButton>
              <ZoomButton aria-label="Zoom out">−</ZoomButton>
            </ZoomControl>
            <Legend>
              <LegendTitle>Popularity</LegendTitle>
              <ul>
                {classes.map(([color, label]) => (
                  <LegendItem key={label}><Swatch $color={color} />{label}</LegendItem>
                ))}
              </ul>
            </Legend>
            <Popup>
              <PopupText><b>Club name:</b> Bob and Barbara's Lounge</PopupText>
              <PopupText><b>Address:</b> 1509 South St, Philadelphia, PA 19146</PopupText>
              <PopupText><b>Popularity Index:</b> 21</PopupText>
              <PopupClose aria-label="Close popup">
                <svg width="22" height="20" viewBox="0 0 22 20" stroke="#c3c3c3" strokeWidth="5"><path d="M2 1l18 18M20 1L2 19" /></svg>
              </PopupClose>
            </Popup>
            <Attribution>
              <a href="#leaflet">Leaflet</a> | © <a href="#osm">OpenStreetMap</a> © <a href="#carto">CartoDB</a>
            </Attribution>
          </MapFrame>
          <Rule />
          <Field>
            <label htmlFor="club">Select a club for sentiment analysis</label>
            <SelectBox>
              <Select id="club"><option>club ranks 1st</option></Select>
              <Caret />
            </SelectBox>
          </Field>
          <Rule />
          <Figure>
            <ChartTitle>Most Used Emoj For the Bar Jose Pistola's</ChartTitle>
            <svg width="972" height="400" viewBox="0 0 972 400">
              <rect x="128" width="844" height="400" fill="#ebebeb" />
              {gridLines.map((x, i) => (
                <path key={x} d={`M${128 + x} 0V400`} stroke="#fff" strokeWidth={i === 1 || i === 3 ? 4 : 2} />
              ))}
              <rect x="164" y="22" width="366" height="378" fill="#b4d8e3" />
              <path fill="#d5459b" d="M56 82C40 70 32 62 32 53C32 36 52 36 56 48C60 36 80 36 80 53C80 62 72 70 56 82Z" />
              <path fill="#ea8cc2" d="M38 48q6-6 12 0l1 4H37zM62 48q6-6 12 0l1 4H61z" />
            </svg>
          </Figure>
        </Content>
      </Page>
    </Window>
  );
}
